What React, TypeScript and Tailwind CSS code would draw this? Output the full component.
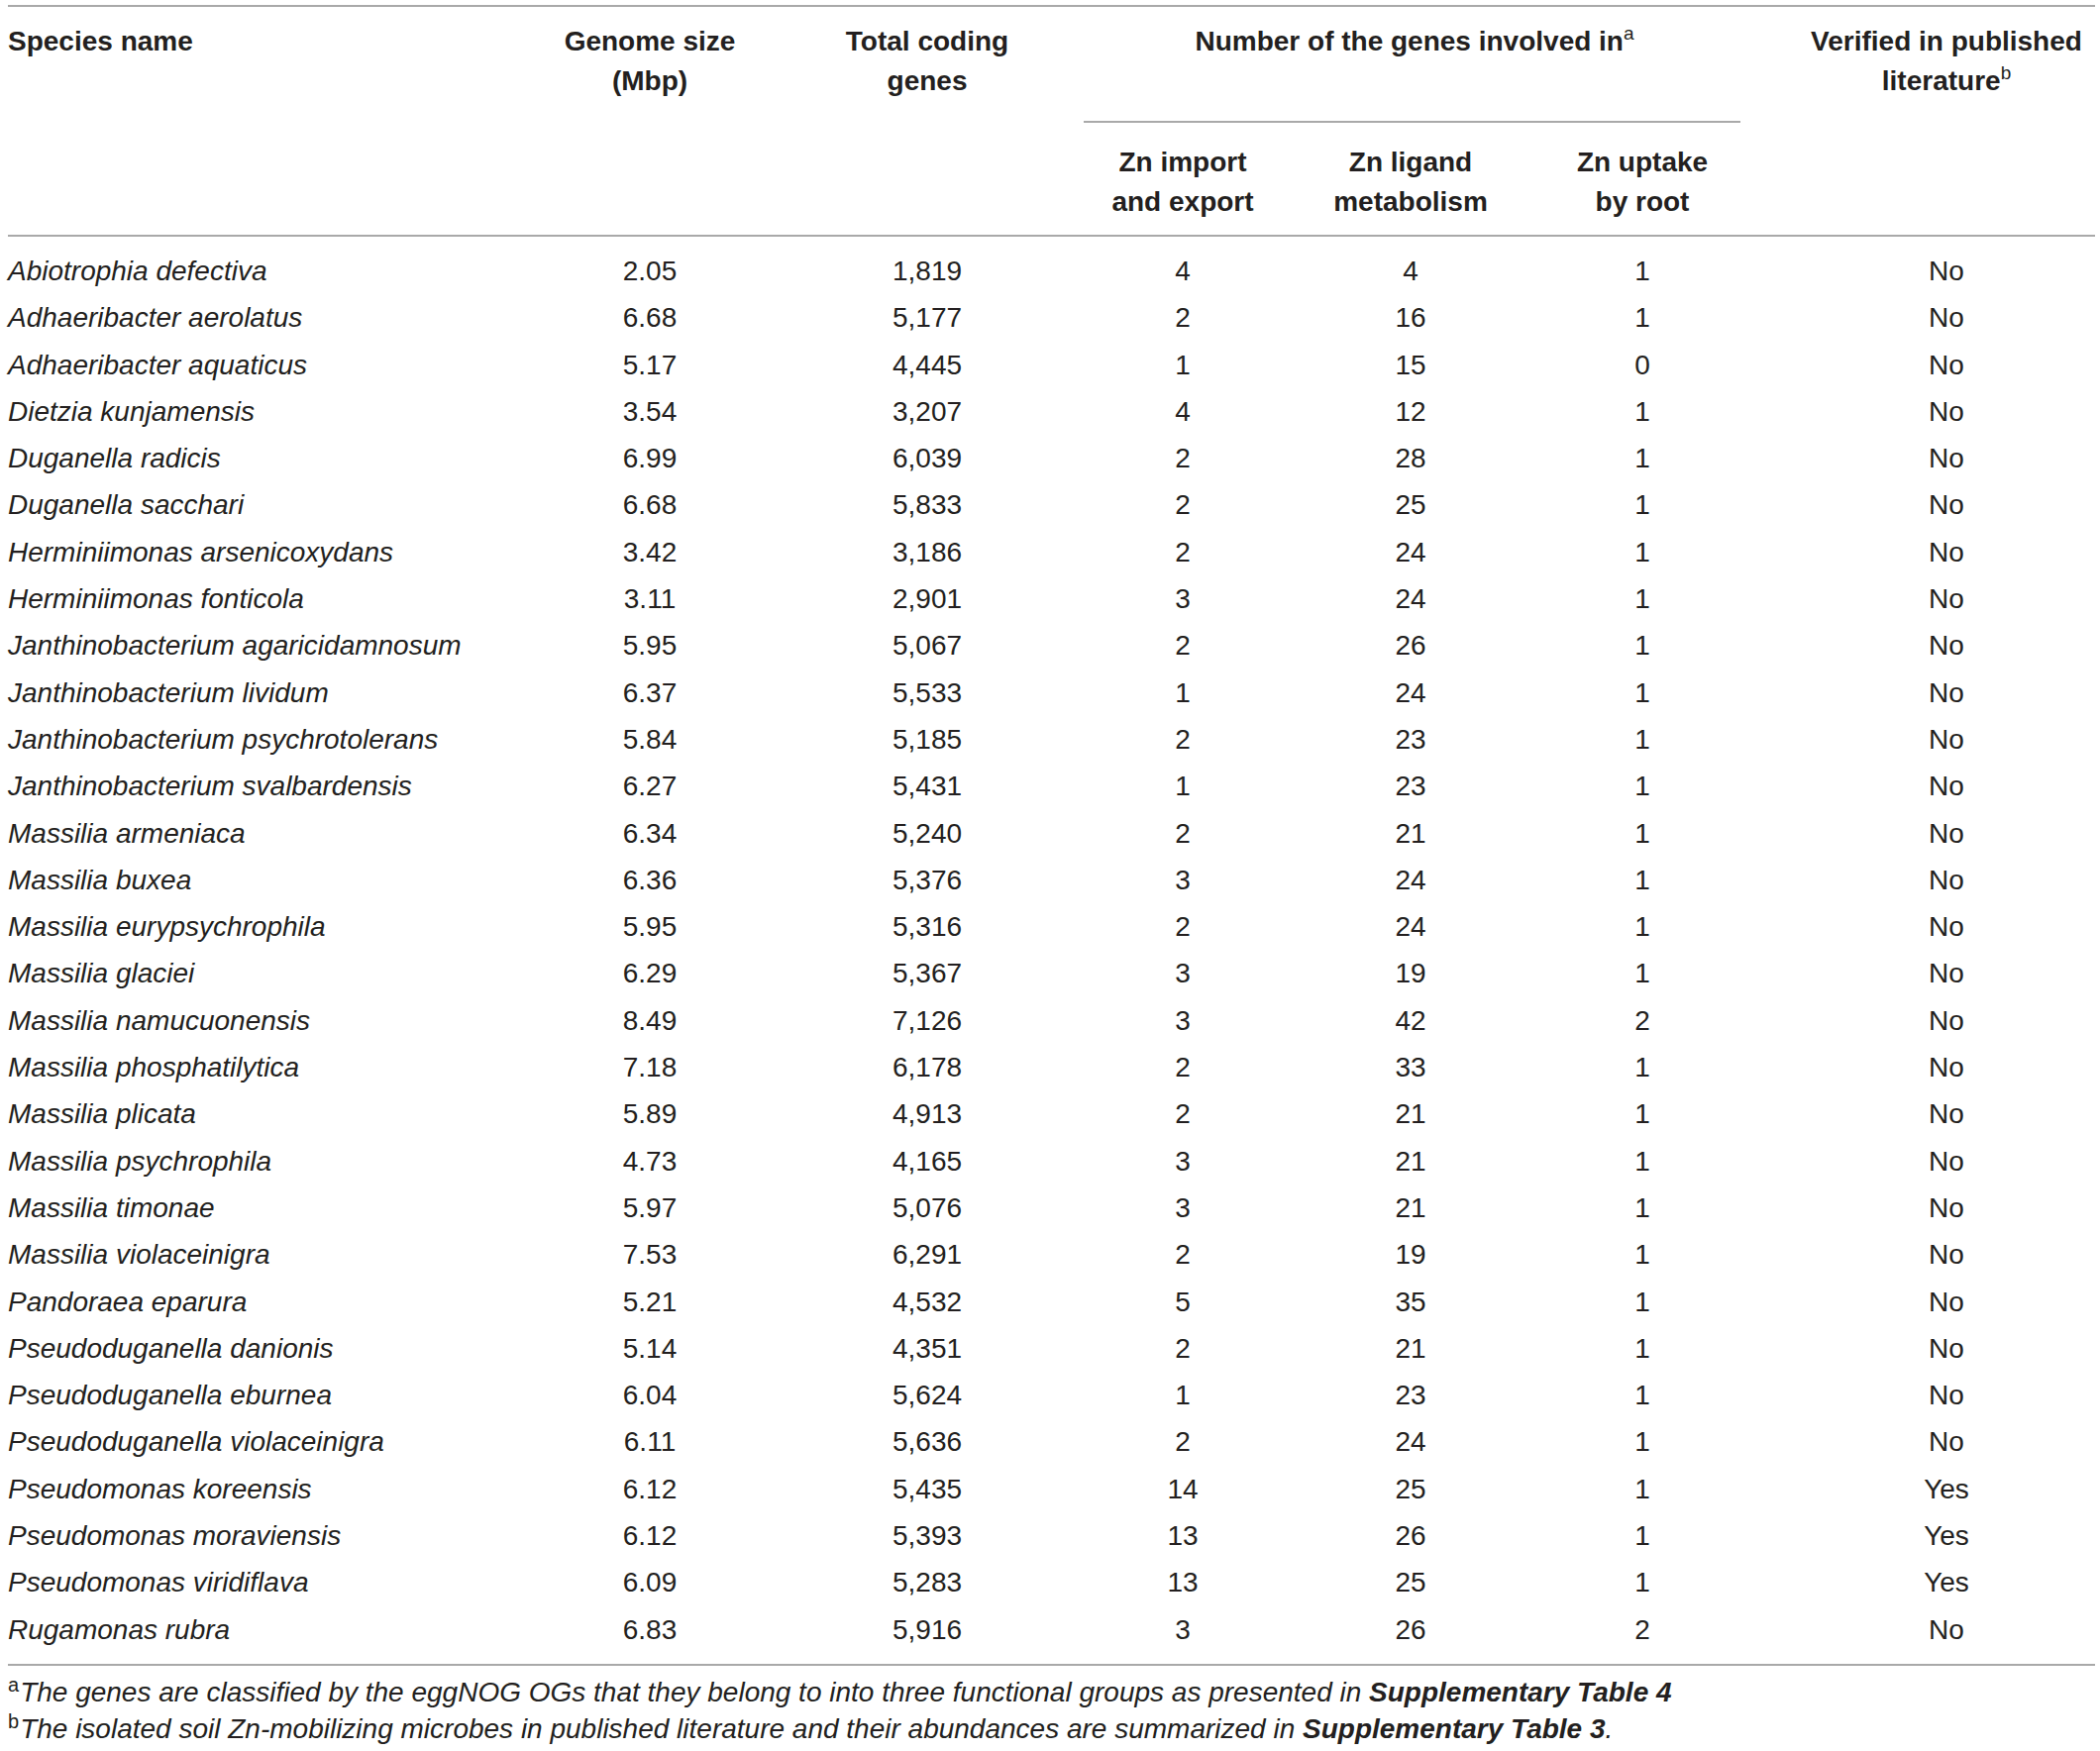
import React from 'react'

const rows: [string, string, string, number, number, number, string][] = [
  ['Abiotrophia defectiva', '2.05', '1,819', 4, 4, 1, 'No'],
  ['Adhaeribacter aerolatus', '6.68', '5,177', 2, 16, 1, 'No'],
  ['Adhaeribacter aquaticus', '5.17', '4,445', 1, 15, 0, 'No'],
  ['Dietzia kunjamensis', '3.54', '3,207', 4, 12, 1, 'No'],
  ['Duganella radicis', '6.99', '6,039', 2, 28, 1, 'No'],
  ['Duganella sacchari', '6.68', '5,833', 2, 25, 1, 'No'],
  ['Herminiimonas arsenicoxydans', '3.42', '3,186', 2, 24, 1, 'No'],
  ['Herminiimonas fonticola', '3.11', '2,901', 3, 24, 1, 'No'],
  ['Janthinobacterium agaricidamnosum', '5.95', '5,067', 2, 26, 1, 'No'],
  ['Janthinobacterium lividum', '6.37', '5,533', 1, 24, 1, 'No'],
  ['Janthinobacterium psychrotolerans', '5.84', '5,185', 2, 23, 1, 'No'],
  ['Janthinobacterium svalbardensis', '6.27', '5,431', 1, 23, 1, 'No'],
  ['Massilia armeniaca', '6.34', '5,240', 2, 21, 1, 'No'],
  ['Massilia buxea', '6.36', '5,376', 3, 24, 1, 'No'],
  ['Massilia eurypsychrophila', '5.95', '5,316', 2, 24, 1, 'No'],
  ['Massilia glaciei', '6.29', '5,367', 3, 19, 1, 'No'],
  ['Massilia namucuonensis', '8.49', '7,126', 3, 42, 2, 'No'],
  ['Massilia phosphatilytica', '7.18', '6,178', 2, 33, 1, 'No'],
  ['Massilia plicata', '5.89', '4,913', 2, 21, 1, 'No'],
  ['Massilia psychrophila', '4.73', '4,165', 3, 21, 1, 'No'],
  ['Massilia timonae', '5.97', '5,076', 3, 21, 1, 'No'],
  ['Massilia violaceinigra', '7.53', '6,291', 2, 19, 1, 'No'],
  ['Pandoraea eparura', '5.21', '4,532', 5, 35, 1, 'No'],
  ['Pseudoduganella danionis', '5.14', '4,351', 2, 21, 1, 'No'],
  ['Pseudoduganella eburnea', '6.04', '5,624', 1, 23, 1, 'No'],
  ['Pseudoduganella violaceinigra', '6.11', '5,636', 2, 24, 1, 'No'],
  ['Pseudomonas koreensis', '6.12', '5,435', 14, 25, 1, 'Yes'],
  ['Pseudomonas moraviensis', '6.12', '5,393', 13, 26, 1, 'Yes'],
  ['Pseudomonas viridiflava', '6.09', '5,283', 13, 25, 1, 'Yes'],
  ['Rugamonas rubra', '6.83', '5,916', 3, 26, 2, 'No'],
]

const grid = 'grid grid-cols-[512px_272px_288px_228px_232px_236px_339px]'
const rule = 'h-[2px] bg-[#a9a9a9]'

export default function App() {
  return (
    <main className="min-h-screen bg-white pt-[5px] pl-[8px] text-[#231f20] font-['Liberation_Sans',Arial,sans-serif]">
      <div className="w-[2107px]">
        <div className={rule} />

        {/* Header */}
        <div className={`${grid} pt-[15px] pb-[13px] text-[28px] leading-[40px] font-bold`}>
          <div className="row-span-2">Species name</div>
          <div className="row-span-2 text-center">
            Genome size
            <br />
            (Mbp)
          </div>
          <div className="row-span-2 text-center">
            Total coding
            <br />
            genes
          </div>
          <div className="col-span-3 flex flex-col items-center">
            <div className="text-center">
              Number of the genes involved in
              <sup className="text-[19px] font-normal relative -top-[11px]">a</sup>
            </div>
            <div className="self-stretch ml-[14px] mr-[19px] mt-[60px] mb-[20px] h-[2px] bg-[#a9a9a9]" />
          </div>
          <div className="row-span-2 pl-[39px] text-center">
            Verified in published
            <br />
            literature<sup className="text-[19px] font-normal relative -top-[11px]">b</sup>
          </div>
          <div className="text-center">
            Zn import
            <br />
            and export
          </div>
          <div className="text-center">
            Zn ligand
            <br />
            metabolism
          </div>
          <div className="text-center">
            Zn uptake
            <br />
            by root
          </div>
        </div>

        <div className={rule} />

        {/* Body */}
        <div className="pt-[11px] pb-[11px] text-[28px] leading-[47.3px]">
          {rows.map((r) => (
            <div key={r[0]} className={`${grid} h-[47.3px]`}>
              <div className="italic whitespace-nowrap">{r[0]}</div>
              <div className="text-center">{r[1]}</div>
              <div className="text-center">{r[2]}</div>
              <div className="text-center">{r[3]}</div>
              <div className="text-center">{r[4]}</div>
              <div className="text-center">{r[5]}</div>
              <div className="pl-[39px] text-center">{r[6]}</div>
            </div>
          ))}
        </div>

        <div className={rule} />

        {/* Footnotes */}
        <div className="pt-[8px] text-[28px] leading-[37px] italic whitespace-nowrap">
          <p>
            <sup className="not-italic text-[20px] relative -top-[10px] mr-[1px]">a</sup>
            The genes are classified by the eggNOG OGs that they belong to into three functional groups as presented in{' '}
            <b>Supplementary Table 4</b>
          </p>
          <p>
            <sup className="not-italic text-[20px] relative -top-[10px] mr-[1px]">b</sup>
            The isolated soil Zn-mobilizing microbes in published literature and their abundances are summarized in{' '}
            <b>Supplementary Table 3</b>.
          </p>
        </div>
      </div>
    </main>
  )
}
